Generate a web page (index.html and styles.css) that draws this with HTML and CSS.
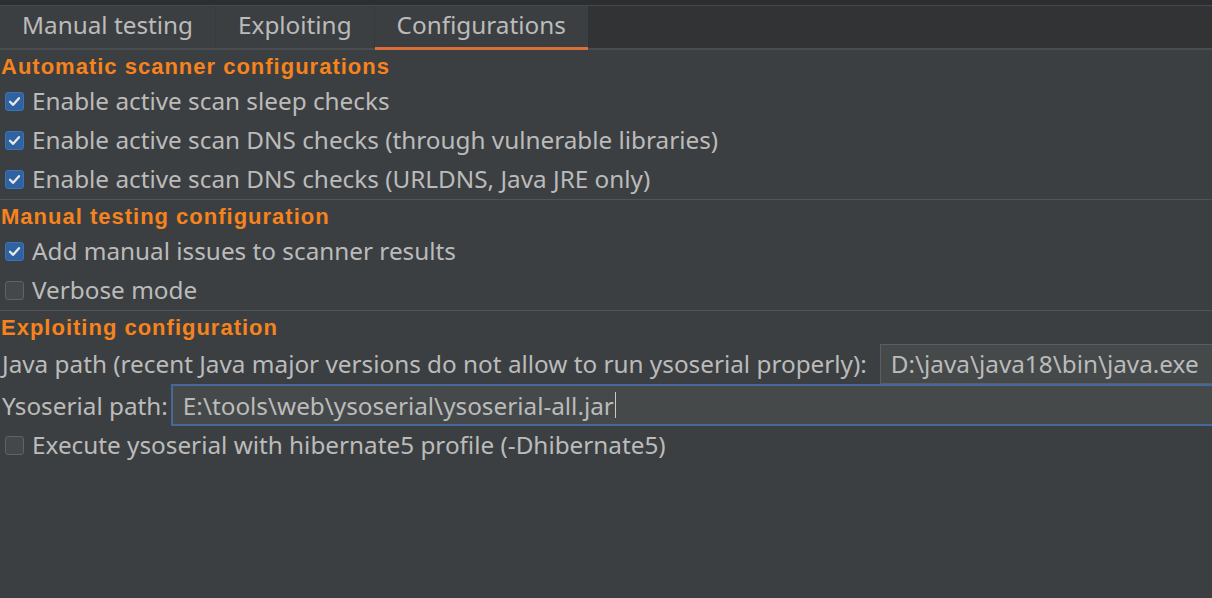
FILE: index.html
```html
<!DOCTYPE html>
<html lang="en">
<head>
<meta charset="utf-8">
<title>Configurations</title>
<link rel="stylesheet" href="styles.css">
</head>
<body>
<div class="topstrip"></div>
<div class="tabs">
  <div class="tab">Manual testing</div>
  <div class="tab">Exploiting</div>
  <div class="tab active">Configurations</div>
  <div class="tab-filler"></div>
</div>
<div class="content">
  <section class="group">
    <div class="heading">Automatic scanner configurations</div>
    <label class="row"><span class="cb checked"><svg viewBox="0 0 19 19"><path d="M4.5 9.8 L8 13.2 L14.5 5.8"/></svg></span><span class="txt">Enable active scan sleep checks</span></label>
    <label class="row"><span class="cb checked"><svg viewBox="0 0 19 19"><path d="M4.5 9.8 L8 13.2 L14.5 5.8"/></svg></span><span class="txt">Enable active scan DNS checks (through vulnerable libraries)</span></label>
    <label class="row"><span class="cb checked"><svg viewBox="0 0 19 19"><path d="M4.5 9.8 L8 13.2 L14.5 5.8"/></svg></span><span class="txt">Enable active scan DNS checks (URLDNS, Java JRE only)</span></label>
  </section>
  <section class="group">
    <div class="heading">Manual testing configuration</div>
    <label class="row"><span class="cb checked"><svg viewBox="0 0 19 19"><path d="M4.5 9.8 L8 13.2 L14.5 5.8"/></svg></span><span class="txt">Add manual issues to scanner results</span></label>
    <label class="row"><span class="cb"></span><span class="txt">Verbose mode</span></label>
  </section>
  <section class="group last">
    <div class="heading">Exploiting configuration</div>
    <div class="field-row java">
      <span class="txt label">Java path (recent Java major versions do not allow to run ysoserial properly):</span>
      <div class="input">D:\java\java18\bin\java.exe</div>
    </div>
    <div class="field-row yso">
      <span class="txt label">Ysoserial path:</span>
      <div class="input focused">E:\tools\web\ysoserial\ysoserial-all.jar<span class="caret"></span></div>
    </div>
    <label class="row"><span class="cb"></span><span class="txt">Execute ysoserial with hibernate5 profile (-Dhibernate5)</span></label>
  </section>
</div>
</body>
</html>
```
FILE: styles.css
```css
html, body {
  margin: 0;
  padding: 0;
  background: #3c3f41;
  overflow: hidden;
}
body {
  width: 1212px;
  height: 598px;
  font-family: "Noto Sans", "Open Sans", "DejaVu Sans", sans-serif;
  font-size: 24.3px;
  color: #bbbbbb;
}
.topstrip {
  height: 5px;
  background: #2c2e30;
  border-bottom: 1px solid #46494b;
}
.tabs {
  display: flex;
  height: 42px;
  background: #313335;
  border-bottom: 2px solid #4a4d4f;
}
.tab {
  position: relative;
  background: #3c3f41;
  padding: 0 22px;
  line-height: 38px;
  border-right: 1px solid #37393b;
  white-space: nowrap;
}
.tab.active {
  border-right: none;
}
.tab.active::after {
  content: "";
  position: absolute;
  left: 0;
  right: 0;
  bottom: -2px;
  height: 3px;
  background: #d9703a;
}
.tab-filler {
  flex: 1;
}
.group {
  border-bottom: 1px solid #515456;
}
.group.last {
  border-bottom: none;
}
.heading {
  height: 32px;
  line-height: 34px;
  font-family: "Liberation Sans", Arial, sans-serif;
  font-weight: bold;
  font-size: 22px;
  letter-spacing: 1px;
  color: #f7831c;
  padding-left: 1px;
}
.row {
  display: flex;
  align-items: center;
  height: 39px;
  gap: 8px;
  padding-left: 5px;
}
.row .txt {
  line-height: 36px;
  margin-top: -2px;
}
.cb {
  box-sizing: border-box;
  width: 19px;
  height: 19px;
  border-radius: 3px;
  border: 1px solid #5f6366;
  background: #43494a;
  flex: none;
  display: flex;
}
.cb.checked {
  background: #2f62a0;
  border-color: #3d72b4;
}
.cb svg {
  width: 17px;
  height: 17px;
}
.cb path {
  fill: none;
  stroke: #e6e8ea;
  stroke-width: 2.6;
  stroke-linecap: round;
  stroke-linejoin: round;
}
.txt {
  white-space: nowrap;
}
.field-row {
  display: flex;
  align-items: center;
  padding-left: 2px;
}
.field-row.java {
  height: 41px;
  gap: 13px;
}
.field-row.yso {
  height: 42px;
  gap: 3px;
}
.input {
  flex: 1;
  box-sizing: border-box;
  background: #45494a;
  border: 1px solid #5b5e60;
  padding-left: 10px;
  margin-right: -6px;
  white-space: nowrap;
  display: flex;
  align-items: center;
}
.java .input {
  height: 40px;
}
.yso .input {
  height: 42px;
  border: 2px solid #46689a;
  padding-left: 10px;
}
.caret {
  display: inline-block;
  width: 1px;
  height: 26px;
  background: #c8c8c8;
  margin-left: 1px;
}
```
